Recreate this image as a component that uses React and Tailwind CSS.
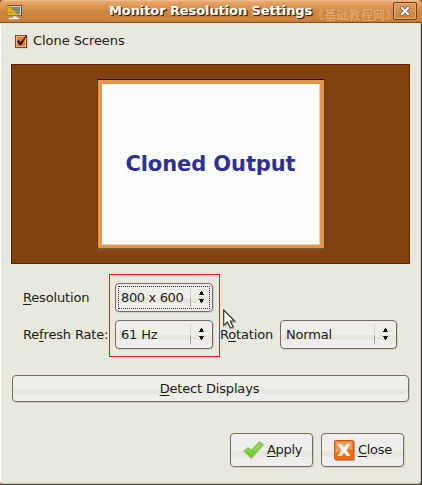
import React from "react";

function Arrows() {
  return (
    <svg width="7" height="13" viewBox="0 0 7 13" fill="#151510" className="shrink-0" shapeRendering="crispEdges">
      <path d="M3 0h1v1h1v2h1v1H1V3h1V1h1z" />
      <path d="M1 8h5v1H5v2H4v1H3v-1H2V9H1z" />
    </svg>
  );
}

const face =
  "border border-[#756c66] rounded-[4px] shadow-[1px_1px_0_#d0cdc4] bg-[linear-gradient(#f1efee_0%,#efeeea_52%,#e6e6dc_53%,#e7e7df_70%,#efeeec_72%,#efeeec_100%)]";

function Combo({ children, focused, className }) {
  return (
    <div className={`relative flex h-[29px] items-center pl-[5px] pr-[7px] ${face} ${className}`}>
      <span className="flex-1 whitespace-nowrap">{children}</span>
      <span className="mr-[7px] h-[19px] w-px bg-[linear-gradient(#d0cec6_50%,#aaa69d_60%)]" />
      <Arrows />
      {focused && <span className="absolute inset-[2px] border border-dotted border-[#33332e]" />}
    </div>
  );
}

function U({ children }) {
  return <span className="underline decoration-1 underline-offset-[2px] [text-decoration-skip-ink:none]">{children}</span>;
}

function MonitorIcon() {
  return (
    <svg width="17" height="16" viewBox="0 0 17 16" className="shrink-0">
      <rect x="1.500" y="1.500" width="14" height="10" fill="#d8d5cb" stroke="#5b554b" />
      <rect x="3" y="3" width="11" height="7" fill="#85837c" />
      <path d="M1 .5v11h12.500z" fill="#dcb414" stroke="#9a7a10" strokeWidth=".6" />
      <path d="M3.500 6.500v2.500H6.500z" fill="#a98b1c" />
      <path d="M7 12h4v1.500h2.500v2h-11v-2H7z" fill="#f4f1e8" stroke="#8b867b" strokeWidth=".6" />
    </svg>
  );
}

export default function App() {
  return (
    <div className="relative flex h-[485px] w-[422px] flex-col overflow-hidden bg-[#8a450c] font-['DejaVu_Sans','Liberation_Sans',sans-serif] text-[13px] leading-[16px] tracking-[-0.17px] text-[#1c1c17]">
      <header className="relative flex h-[23px] shrink-0 items-start rounded-t-[4px] border-b border-[#8b5120] bg-[linear-gradient(#f0c39a_0,#e9a365_2px,#dd9551_7px,#d5924c_9px,#cc8440_12px,#cd853f_20px,#bd763b_22px)] pl-[6px] pt-[4px]">
        <MonitorIcon />
        <h1 className="-mt-[2px] ml-[86px] w-[204px] whitespace-nowrap text-[13px] font-bold leading-[17px] tracking-[-0.09px] text-white [text-shadow:1px_1px_1px_#3b2512,1px_1px_0_#3b2512]">
          Monitor Resolution Settings
        </h1>
        <span className="-ml-[1px] mt-[3px] w-[86px] whitespace-nowrap font-['Noto_Sans_CJK_SC',sans-serif] text-[12px] leading-[16px] tracking-[0.2px] text-[#e6ad77]">
          《基础教程网》
        </span>
        <button className="absolute left-[393px] top-[2px] flex h-[18px] w-[24px] items-center justify-center rounded-[2px] border border-[#75431d] bg-[linear-gradient(#dda065,#c9813f)] shadow-[inset_0_0_0_1px_#e3ad79]">
          <svg width="10" height="10" viewBox="0 0 10 10">
            <path d="M2 2l6 6M8 2L2 8" stroke="#693b19" strokeWidth="3.6" strokeLinecap="square" />
            <path d="M2 2l6 6M8 2L2 8" stroke="white" strokeWidth="2.4" strokeLinecap="square" />
          </svg>
        </button>
      </header>

      <main className="flex flex-1 flex-col rounded-b-[4px] border-b border-l border-r border-b-[#463b31] border-l-white border-r-[#333029] bg-[#e8e8df] shadow-[inset_-1px_-1px_0_#d4c9be]">
        <label className="flex h-[41px] items-start pl-[14px] pt-[10px]">
          <svg width="13" height="14" viewBox="0 0 13 14" className="mt-[2px]">
            <rect x="1.500" y="1.500" width="11.500" height="12" fill="#c8c2b8" />
            <rect x=".5" y=".5" width="11" height="12" fill="#ee7c32" stroke="#7c4827" />
            <rect x="1.500" y="1.500" width="9" height="10" fill="none" stroke="#f3b686" />
            <path d="M2.500 6l1.700-.6 1.300 2.300L11.500.5 6.300 10H4.500z" fill="#17120d" stroke="#17120d" strokeWidth=".5" />
          </svg>
          <span className="ml-[5px] tracking-[-0.06px]">Clone Screens</span>
        </label>

        <section className="ml-[10px] flex h-[200px] w-[399px] shrink-0 items-start border border-[#5a2405] bg-[#814310] pl-[85px] pt-[14px]">
          <div className="h-[171px] w-[228px] border-b-2 border-l border-r border-t border-b-[#7f5429] border-l-[#593b20] border-r-[#6b431e] border-t-[#21140a] bg-[#e8944b] p-[4px] pb-[3px]">
            <div className="flex h-full items-center justify-center border-b border-r border-[#d9d3c0] bg-[#fafcf9] text-[21px] font-bold tracking-[-0.1px] text-[#2f3192]">
              <span className="whitespace-nowrap">Cloned Output</span>
            </div>
          </div>
        </section>

        <section className="mt-[10px] flex h-[83px] shrink-0 pl-[22px]">
          <div className="w-[86px] shrink-0 whitespace-nowrap pt-[16px]">
            <div className="h-[37px]"><U>R</U>esolution</div>
            <div>Re<U>f</U>resh Rate:</div>
          </div>
          <div className="flex w-[111px] shrink-0 flex-col gap-[8px] border border-[#ff1010] pl-[5px] pt-[8px]">
            <Combo focused className="w-[98px] tracking-[-0.35px]">800 x 600</Combo>
            <Combo className="w-[98px]">61 Hz</Combo>
          </div>
          <div className="relative mt-[46px] flex h-[29px] items-center self-start">
            <span className="w-[60px] whitespace-nowrap">R<U>o</U>tation</span>
            <Combo className="w-[117px]">Normal</Combo>
            <svg width="14" height="22" viewBox="0 0 14 22" className="absolute left-[3px] top-[-11px]">
              <path d="M2 2v17l4-4 3 6 3-2-3-5h5z" fill="#77756e" opacity=".35" />
              <path d="M.7 1v15.500l3.800-3.500 2.800 6 2.700-1.300-2.700-5.700h4.200z" fill="white" stroke="#3a3936" strokeWidth="1.200" />
            </svg>
          </div>
        </section>

        <button className={`ml-[11px] mt-[18px] h-[27px] w-[397px] shrink-0 pr-[2px] ${face}`}><U>D</U>etect Displays</button>

        <footer className="mt-[31px] flex gap-[8px] pl-[229px]">
          <button className={`flex h-[34px] w-[83px] items-center pl-[12px] tracking-[-0.3px] ${face}`}>
            <svg width="22" height="20" viewBox="0 0 22 20">
              <path d="M2 12l3-3 4 3 8-10 4 3L8.500 19.500z" fill="#aaa89f" opacity=".6" />
              <path d="M.7 11l4.300-3.500L8.300 10l8.200-8.500 4 3L8 18z" fill="#73cc28" stroke="#8dbb69" strokeWidth=".8" />
              <path d="M2.500 11l2.500-2 3.500 2.700 8-8.700 2.500 1.500-6 6.500c-3 0-7 1-10.500 0z" fill="#9bdf69" opacity=".75" />
            </svg>
            <span className="ml-[2px]"><U>A</U>pply</span>
          </button>
          <button className={`flex h-[34px] w-[83px] items-center pl-[12px] tracking-[-0.3px] ${face}`}>
            <svg width="21" height="21" viewBox="0 0 21 21">
              <rect x="1" y="1" width="20" height="20" rx="1" fill="#aaa69d" />
              <rect x=".5" y=".5" width="19" height="19" rx="1" fill="#f26a11" stroke="#d35a13" />
              <path d="M1.500 1.500h17v8c-6 0-12 1-17 4z" fill="#f49a5c" />
              <path d="M3.500 4h4l2.500 3.500L12.500 4h4l-4.200 6 4.200 6h-4L10 12.500 7.500 16h-4l4.200-6z" fill="white" />
            </svg>
            <span className="ml-[3px]"><U>C</U>lose</span>
          </button>
        </footer>
      </main>
    </div>
  );
}
